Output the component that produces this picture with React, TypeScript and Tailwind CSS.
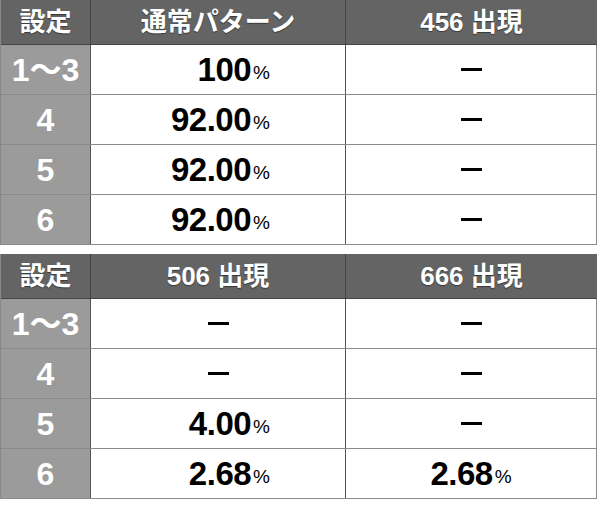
import React from "react";

const font = { fontFamily: '"Liberation Sans", Arial, "Noto Sans CJK JP", sans-serif' };

type Cell = { kind: "num"; v: string; align: "right" | "center" } | { kind: "dash" };

function Dash() {
  return <div className="w-[21px] h-[3px] bg-black" />;
}

function Value({ c }: { c: Cell }) {
  if (c.kind === "dash") {
    return (
      <div className="flex items-center justify-center h-full">
        <Dash />
      </div>
    );
  }
  return (
    <div
      className={
        c.align === "right"
          ? "flex items-center justify-end h-full pr-[75px]"
          : "flex items-center justify-center h-full"
      }
    >
      <span className="text-[33px] font-bold text-black tracking-[-0.5px] leading-none">{c.v}</span>
      <span className="text-[19px] text-black leading-none ml-[2px] mt-[6px]">%</span>
    </div>
  );
}

function Table({ headers, rows }: { headers: string[]; rows: { label: string; cells: Cell[] }[] }) {
  return (
    <div className="w-[597px] border-l border-[#888]">
      <div className="grid grid-cols-[90px_255px_1fr] h-[45px] bg-[#646464] border-b border-[#444]">
        {headers.map((h, i) => (
          <div
            key={i}
            className={
              "flex items-center justify-center text-white font-bold text-[26px] [text-shadow:0_1px_1px_rgba(0,0,0,0.45)] " +
              (i < 2 ? "border-r border-[#444]" : "")
            }
          >
            {h}
          </div>
        ))}
      </div>
      {rows.map((r, ri) => (
        <div key={ri} className="grid grid-cols-[90px_255px_1fr] h-[50px] border-b border-[#8a8a8a] bg-white">
          <div className="flex items-center justify-center bg-[#9b9b9b] border-r border-[#555] text-white font-bold text-[32px] leading-none">
            {r.label}
          </div>
          <div className="border-r border-[#555]">
            <Value c={r.cells[0]} />
          </div>
          <div className="border-r border-[#8a8a8a]">
            <Value c={r.cells[1]} />
          </div>
        </div>
      ))}
    </div>
  );
}

export default function App() {
  const n = (v: string, align: "right" | "center"): Cell => ({ kind: "num", v, align });
  const d: Cell = { kind: "dash" };
  return (
    <div className="w-[600px] h-[507px] bg-white flex flex-col gap-[9px]" style={font}>
      <Table
        headers={["設定", "通常パターン", "456 出現"]}
        rows={[
          { label: "1〜3", cells: [n("100", "right"), d] },
          { label: "4", cells: [n("92.00", "right"), d] },
          { label: "5", cells: [n("92.00", "right"), d] },
          { label: "6", cells: [n("92.00", "right"), d] },
        ]}
      />
      <Table
        headers={["設定", "506 出現", "666 出現"]}
        rows={[
          { label: "1〜3", cells: [d, d] },
          { label: "4", cells: [d, d] },
          { label: "5", cells: [n("4.00", "right"), d] },
          { label: "6", cells: [n("2.68", "right"), n("2.68", "center")] },
        ]}
      />
    </div>
  );
}
